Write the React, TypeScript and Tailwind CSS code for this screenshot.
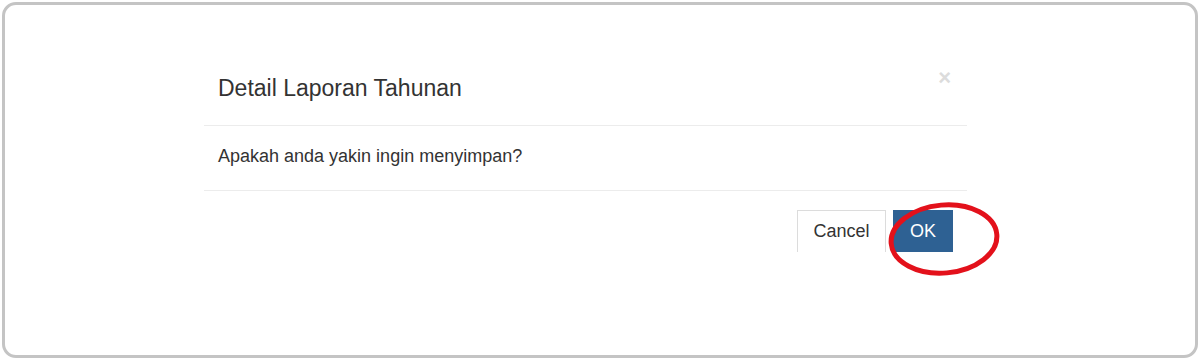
export default function App() {
  return (
    <div className="w-[1200px] h-[360px] bg-white p-[2px] font-['Liberation_Sans',Arial,sans-serif]">
      <div className="h-full w-full rounded-[14px] border-[3px] border-[#c4c4c4] bg-white">
        <div className="ml-[199px] mt-[52px] w-[763px]">
          {/* Header */}
          <div className="relative flex h-[69px] items-start border-b border-[#ececec] pl-[14px] pt-[16px]">
            <h4 className="text-[23px] leading-[30px] text-[#333]">Detail Laporan Tahunan</h4>
            <span className="absolute right-[16px] top-[10px] text-[22px] font-bold leading-none text-[#dcdcdc]">
              ×
            </span>
          </div>

          {/* Body */}
          <div className="h-[65px] border-b border-[#ececec] pl-[14px] pt-[18px]">
            <p className="text-[18px] leading-[24px] text-[#333]">Apakah anda yakin ingin menyimpan?</p>
          </div>

          {/* Footer */}
          <div className="relative flex justify-end gap-[7px] pr-[14px] pt-[19px]">
            <button className="h-[42px] w-[89px] border border-b-0 border-[#dcdcdc] bg-white text-[18px] text-[#333]">
              Cancel
            </button>
            <button className="h-[42px] w-[60px] bg-[#2e6193] text-[18px] text-white">OK</button>
            <svg
              className="pointer-events-none absolute left-[682px] top-[9px]"
              width="116"
              height="80"
              viewBox="0 0 116 80"
            >
              <ellipse
                cx="58"
                cy="39"
                rx="53"
                ry="34"
                fill="none"
                stroke="#e3111b"
                strokeWidth="5"
                transform="rotate(-5 58 39)"
              />
            </svg>
          </div>
        </div>
      </div>
    </div>
  );
}
